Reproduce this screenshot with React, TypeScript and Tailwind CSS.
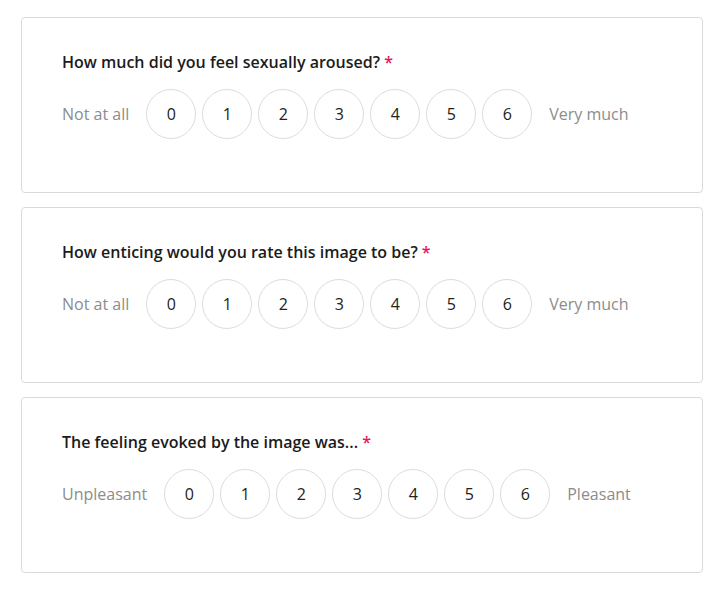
const questions = [
  { title: "How much did you feel sexually aroused?", low: "Not at all", high: "Very much" },
  { title: "How enticing would you rate this image to be?", low: "Not at all", high: "Very much" },
  { title: "The feeling evoked by the image was...", low: "Unpleasant", high: "Pleasant" },
]

const Scale = ({ title, low, high }: { title: string; low: string; high: string }) => (
  <div className="h-[176px] rounded-[4px] border border-[#dadada] bg-white pt-[32px] pl-[40px]">
    <h2 className="text-[16px] leading-[24px] font-semibold text-[#1b1b1b]">
      {title} <span className="text-[#e3165b]">*</span>
    </h2>
    <div className="mt-[15px] flex items-center">
      <span className="mr-[17px] text-[16px] text-[#8c8c8c]">{low}</span>
      <div className="flex gap-[6px]">
        {[0, 1, 2, 3, 4, 5, 6].map((n) => (
          <button
            key={n}
            type="button"
            className="flex h-[50px] w-[50px] items-center justify-center rounded-full border border-[#dcdcdc] bg-white text-[16px] text-[#222]"
          >
            {n}
          </button>
        ))}
      </div>
      <span className="ml-[17px] text-[16px] text-[#8c8c8c]">{high}</span>
    </div>
  </div>
)

export default function App() {
  return (
    <div className="min-h-[591px] bg-white px-[18px] pt-[17px] font-['Open_Sans',sans-serif]">
      <div className="ml-[3px] flex w-[682px] flex-col gap-[14px]">
        {questions.map((q) => (
          <Scale key={q.title} {...q} />
        ))}
      </div>
    </div>
  )
}
